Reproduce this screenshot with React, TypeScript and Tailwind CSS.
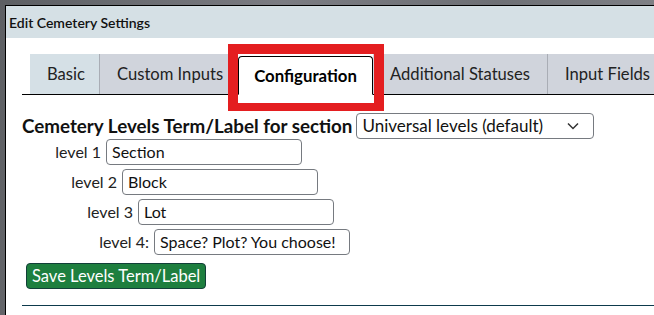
import React from 'react';

const font = { fontFamily: 'Lato, "Noto Sans", sans-serif' };

const tabs = [
  { label: 'Basic', w: 'w-[70px]', bg: 'bg-[#d5e0e6]' },
  { label: 'Custom Inputs', w: 'w-[138px]', bg: 'bg-[#d0d4dc]' },
  { label: 'Configuration', w: 'w-[135px]', active: true },
  { label: 'Additional Statuses', w: 'w-[175px]', bg: 'bg-[#d0d4dc]' },
  { label: 'Input Fields', w: 'w-[120px]', bg: 'bg-[#d0d4dc]' },
];

const levels = [
  { label: 'level 1', value: 'Section' },
  { label: 'level 2', value: 'Block' },
  { label: 'level 3', value: 'Lot' },
  { label: 'level 4:', value: 'Space? Plot? You choose!' },
];

const indent = ['pl-0', 'pl-[16px]', 'pl-[32px]', 'pl-[48px]'];

export default function App() {
  return (
    <div className="relative w-[654px] h-[315px] overflow-hidden bg-[linear-gradient(100deg,#5d5f63,#7b7c82_40%,#6e7075_70%,#85868b)] pl-[5px] pt-[5px]" style={font}>
      <div className="w-[720px] h-[400px] border border-black bg-white">
        <div className="h-[32px] bg-[#d5e0e5] flex items-center px-[3px] text-[14px] font-semibold text-[#111]">
          Edit Cemetery Settings
        </div>

        <div className="px-[16px]">
          <div className="mt-[16px] flex items-end border-b border-black pl-[8px] h-[41px]">
            {tabs.map(t =>
              t.active ? (
                <div key={t.label} className={`${t.w} h-[39px] -mb-px bg-white border border-black border-b-white rounded-t-[4px] flex items-center justify-center text-[16.8px] font-bold text-black`}>
                  {t.label}
                </div>
              ) : (
                <div key={t.label} className={`${t.w} ${t.bg} h-[40px] border-r border-[#a9adb5] flex items-center pl-[17px] text-[16.6px] text-[#222]`}>
                  {t.label}
                </div>
              )
            )}
          </div>

          <div className="mt-[18px] h-[26px] flex items-center gap-[4px]">
            <span className="text-[18.8px] font-bold text-[#111] leading-none">Cemetery Levels Term/Label for section</span>
            <div className="w-[238px] h-[26px] border border-[#767a80] rounded-[4px] flex items-center justify-between pl-[5px] pr-[14px] text-[17px] text-[#111]">
              <span>Universal levels (default)</span>
              <svg width="12" height="8" viewBox="0 0 12 8" fill="none" stroke="#333" strokeWidth="1.5">
                <path d="M1 1.5 6 6.5 11 1.5" />
              </svg>
            </div>
          </div>

          <div className="flex flex-col gap-[4px]">
            {levels.map((l, i) => (
              <div key={l.label} className={`flex items-center ${indent[i]}`}>
                <span className="w-[79px] text-right text-[16px] text-[#222]">{l.label}</span>
                <div className="ml-[5px] w-[196px] h-[26px] border border-[#767a80] rounded-[4px] flex items-center pl-[5px] text-[16px] text-[#111]">
                  {l.value}
                </div>
              </div>
            ))}
          </div>

          <button className="mt-[8px] ml-[4px] h-[26px] px-[5px] bg-[#1e7f3f] border border-[#123f38] rounded-[4px] text-white text-[16.5px]">
            Save Levels Term/Label
          </button>

          <div className="mt-[16px] border-t border-[#0d3a4c]" />
        </div>
      </div>

      <div className="absolute left-[228px] top-[44px] w-[156px] h-[67px] border-[10px] border-[#e41e20] border-b-[8px] pointer-events-none" />
    </div>
  );
}
